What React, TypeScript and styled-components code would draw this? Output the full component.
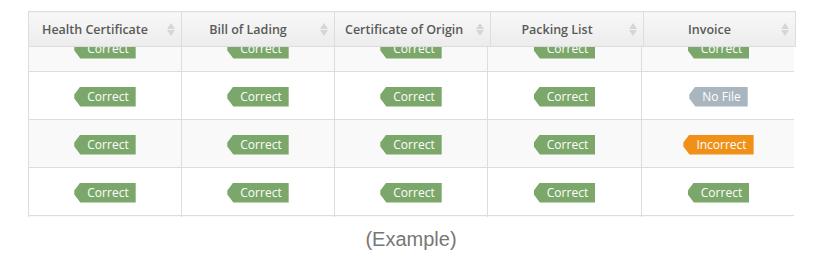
import React, {useLayoutEffect, useRef} from 'react';
import styled, {createGlobalStyle} from 'styled-components'

const GlobalStyle = createGlobalStyle`
    body {
        margin: 0;
        background: #ffffff;
        font-family: "Open Sans", "Liberation Sans", sans-serif;
    }
`

const colors = {
    border: '#dddddd',
    headerText: '#595959',
    stripe: '#f9f9f9',
    correct: '#7ba76a',
    incorrect: '#ef9119',
    noFile: '#a9b5bf',
    caption: '#777777',
}

const Page = styled.div`
    padding: 11px 0 0 28px;
    width: 766px;
`

const HeadTable = styled.table`
    width: 767px;
    border-collapse: collapse;
    table-layout: fixed;
`

const HeadCell = styled.th`
    position: relative;
    height: 34px;
    padding: 0 30px 0 10px;
    border: 1px solid ${colors.border};
    background: linear-gradient(#f8f8f8, #ececec);
    color: ${colors.headerText};
    font-size: 12.5px;
    font-weight: 600;
    text-align: center;
    white-space: nowrap;
`

const SortIcon = styled.span`
    position: absolute;
    right: 6px;
    top: 11px;
    display: flex;
    flex-direction: column;
    gap: 1px;
    &::before, &::after {
        content: '';
        border-left: 4px solid transparent;
        border-right: 4px solid transparent;
    }
    &::before {
        border-bottom: 6px solid #d6d6d6;
    }
    &::after {
        border-top: 6px solid #d6d6d6;
    }
`

const ScrollBody = styled.div`
    height: 170px;
    overflow: hidden;
`

const BodyTable = styled.table`
    width: 767px;
    border-collapse: collapse;
    table-layout: fixed;
`

const Row = styled.tr<{striped: boolean}>`
    background: ${p => p.striped ? colors.stripe : '#ffffff'};
`

const Cell = styled.td`
    height: 46px;
    padding: 0 0 1px;
    border: 1px solid ${colors.border};
    text-align: center;
    vertical-align: middle;
`

const Tag = styled.span<{tone: string}>`
    display: inline-block;
    height: 20px;
    line-height: 20px;
    padding: 0 7px 0 13px;
    background: ${p => p.tone};
    color: #ffffff;
    font-size: 12px;
    clip-path: polygon(6px 0, 100% 0, 100% 100%, 6px 100%, 0 60%, 0 40%);
`

const Caption = styled.div`
    margin-top: 11px;
    text-align: center;
    font-family: "Liberation Sans", Arial, sans-serif;
    font-size: 20px;
    color: ${colors.caption};
`

type Status = 'Correct' | 'Incorrect' | 'No File'

const toneFor = (s: Status) =>
    s === 'Correct' ? colors.correct
    : s === 'Incorrect' ? colors.incorrect
    : colors.noFile

const headers = [
    {title: 'Health Certificate', width: 153},
    {title: 'Bill of Lading', width: 153},
    {title: 'Certificate of Origin', width: 156},
    {title: 'Packing List', width: 153},
    {title: 'Invoice', width: 152},
]

const bodyWidths = [153, 153, 153, 154, 154]

const all = (s: Status): Status[] => [s, s, s, s, s]

const rows: Status[][] = [
    all('Correct'),
    ['Correct', 'Correct', 'Correct', 'Correct', 'No File'],
    ['Correct', 'Correct', 'Correct', 'Correct', 'Incorrect'],
    all('Correct'),
    all('Correct'),
]

const DocumentTable = () => {
    const bodyRef = useRef<HTMLDivElement>(null)

    useLayoutEffect(() => {
        if (bodyRef.current) bodyRef.current.scrollTop = 24
    }, [])

    return (
        <div>
            <HeadTable>
                <colgroup>
                    {headers.map(h => <col key={h.title} style={{width: h.width}} />)}
                </colgroup>
                <thead>
                    <tr>
                        {headers.map(h => (
                            <HeadCell key={h.title}>
                                {h.title}
                                <SortIcon />
                            </HeadCell>
                        ))}
                    </tr>
                </thead>
            </HeadTable>
            <ScrollBody ref={bodyRef}>
                <BodyTable>
                    <colgroup>
                        {bodyWidths.map((w, i) => <col key={i} style={{width: w}} />)}
                    </colgroup>
                    <tbody>
                        {rows.map((row, r) => (
                            <Row key={r} striped={r % 2 === 0}>
                                {row.map((s, c) => (
                                    <Cell key={c}>
                                        <Tag tone={toneFor(s)}>{s}</Tag>
                                    </Cell>
                                ))}
                            </Row>
                        ))}
                    </tbody>
                </BodyTable>
            </ScrollBody>
        </div>
    )
}

const App = () => {
    return (
        <Page>
            <GlobalStyle />
            <DocumentTable />
            <Caption>(Example)</Caption>
        </Page>
    )
}

export default App
